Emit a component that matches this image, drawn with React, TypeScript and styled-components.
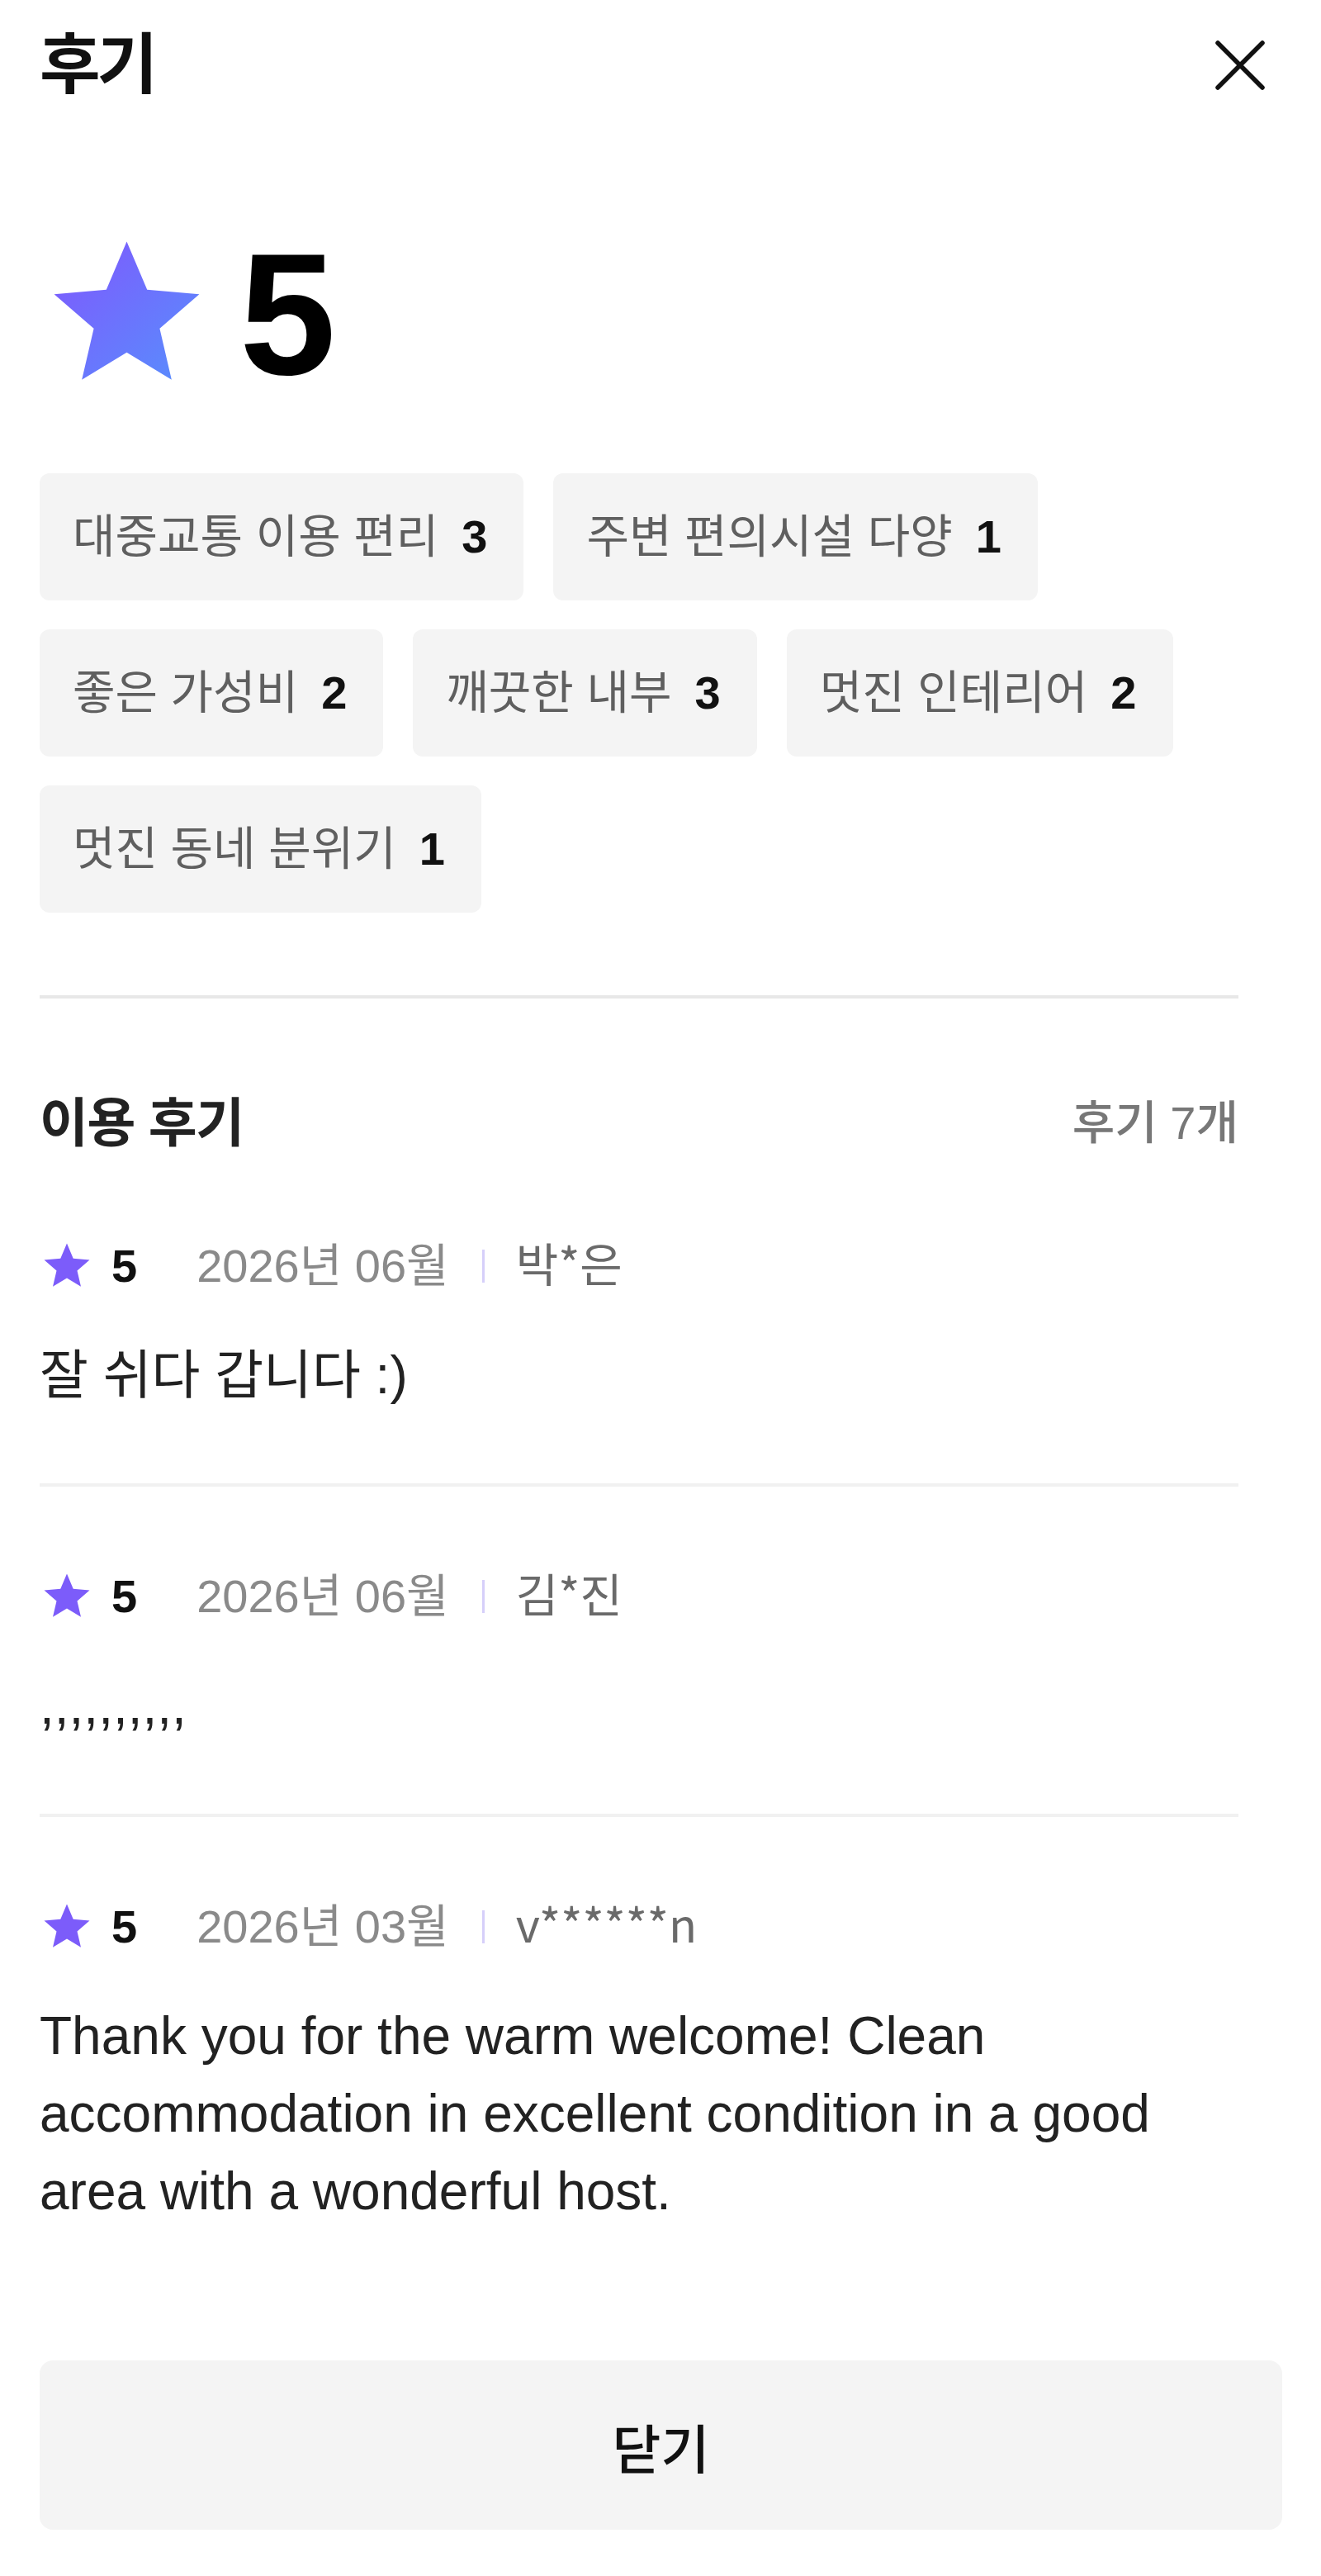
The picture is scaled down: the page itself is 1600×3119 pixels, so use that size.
import { createGlobalStyle } from 'styled-components';
import styled from 'styled-components';

interface Keyword {
    label: string;
    count: number;
}

interface Review {
    id: number;
    rating: number;
    date: string;
    author: string;
    text: string;
}

const keywords: Keyword[] = [
    { label: '대중교통 이용 편리', count: 3 },
    { label: '주변 편의시설 다양', count: 1 },
    { label: '좋은 가성비', count: 2 },
    { label: '깨끗한 내부', count: 3 },
    { label: '멋진 인테리어', count: 2 },
    { label: '멋진 동네 분위기', count: 1 },
];

const reviews: Review[] = [
    { id: 1, rating: 5, date: '2026년 06월', author: '박*은', text: '잘 쉬다 갑니다 :)' },
    { id: 2, rating: 5, date: '2026년 06월', author: '김*진', text: ',,,,,,,,,,' },
    {
        id: 3,
        rating: 5,
        date: '2026년 03월',
        author: 'v******n',
        text: 'Thank you for the warm welcome! Clean accommodation in excellent condition in a good area with a wonderful host.',
    },
];

const STAR_PATH = 'M12 17.27L18.18 21l-1.64-7.03L22 9.24l-7.19-.61L12 2 9.19 8.63 2 9.24l5.46 4.73L5.82 21z';

function Star({ size, fill }: { size: number; fill: string }) {
    return (
        <svg width={size} height={size} viewBox="0 0 24 24" aria-hidden="true">
            <defs>
                <linearGradient id="starGradient" x1="0" y1="0" x2="1" y2="1">
                    <stop offset="0" stopColor="#8156fd" />
                    <stop offset="1" stopColor="#578ffd" />
                </linearGradient>
            </defs>
            <path d={STAR_PATH} fill={fill} />
        </svg>
    );
}

function App() {
    return (
        <>
            <GlobalStyle />
            <Page>
                <Header>
                    <Title>후기</Title>
                    <CloseButton aria-label="닫기">
                        <svg width="60" height="60" viewBox="0 0 60 60">
                            <path d="M3 3L57 57M57 3L3 57" stroke="#111" strokeWidth="5.5" strokeLinecap="round" />
                        </svg>
                    </CloseButton>
                </Header>

                <Content>
                    <Rating>
                        <Star size={211} fill="url(#starGradient)" />
                        <RatingValue>5</RatingValue>
                    </Rating>

                    <KeywordList>
                        {keywords.map((keyword) => (
                            <KeywordChip key={keyword.label}>
                                <KeywordLabel>{keyword.label}</KeywordLabel>
                                <KeywordCount>{keyword.count}</KeywordCount>
                            </KeywordChip>
                        ))}
                    </KeywordList>

                    <Divider />

                    <SectionHead>
                        <SectionTitle>이용 후기</SectionTitle>
                        <ReviewCount>후기 7개</ReviewCount>
                    </SectionHead>

                    {reviews.map((review) => (
                        <ReviewItem key={review.id}>
                            <Meta>
                                <Star size={66} fill="#7c5cfa" />
                                <Score>{review.rating}</Score>
                                <MetaDate>{review.date}</MetaDate>
                                <MetaDivider />
                                <Author>{review.author}</Author>
                            </Meta>
                            <ReviewText>{review.text}</ReviewText>
                        </ReviewItem>
                    ))}
                </Content>

                <Footer>
                    <CloseAction>닫기</CloseAction>
                </Footer>
            </Page>
        </>
    );
}

export default App;

const GlobalStyle = createGlobalStyle`
    * {
        box-sizing: border-box;
    }

    body {
        margin: 0;
        background: #fff;
        color: #111;
        font-family: "Liberation Sans", "Noto Sans CJK KR", sans-serif;
    }
`;

const Page = styled.div`
    min-height: 100vh;

    display: flex;
    flex-direction: column;
`;

const Header = styled.header`
    height: 158px;
    padding: 0 68px 0 48px;

    display: flex;
    align-items: center;
    justify-content: space-between;
`;

const Title = styled.h1`
    margin: 0;

    font-size: 80px;
    line-height: 1;
    font-weight: 700;
    letter-spacing: -0.05em;
    color: #111;
`;

const CloseButton = styled.button`
    width: 60px;
    height: 60px;
    padding: 0;

    display: flex;

    border: none;
    background: none;
    cursor: pointer;
`;

const Content = styled.main`
    padding: 0 100px 0 48px;
`;

const Rating = styled.div`
    margin-top: 117px;

    display: flex;
    align-items: center;
`;

const RatingValue = styled.span`
    margin-left: 31px;

    font-size: 210px;
    line-height: 1;
    font-weight: 700;
    color: #000;
`;

const KeywordList = styled.ul`
    list-style: none;
    margin: 87px 0 0;
    padding: 0;

    display: flex;
    flex-wrap: wrap;
    gap: 35px 36px;
`;

const KeywordChip = styled.li`
    height: 154px;
    padding: 0 44px 0 40px;

    display: flex;
    align-items: center;
    gap: 28px;

    background-color: #f4f4f4;
    border-radius: 12px;

    font-size: 56px;
    line-height: 1;
    white-space: nowrap;
`;

const KeywordLabel = styled.span`
    color: #5f5f5f;
`;

const KeywordCount = styled.span`
    color: #111;
    font-weight: 700;
`;

const Divider = styled.hr`
    margin: 100px 0 0;

    height: 4px;

    border: none;
    background-color: #e8e8e8;
`;

const SectionHead = styled.div`
    margin-top: 111px;
    height: 80px;

    display: flex;
    align-items: center;
    justify-content: space-between;
`;

const SectionTitle = styled.h2`
    margin: 0;

    font-size: 64px;
    line-height: 1;
    font-weight: 700;
    letter-spacing: -0.02em;
    color: #222;
`;

const ReviewCount = styled.span`
    font-size: 56px;
    line-height: 1;
    font-weight: 500;
    color: #777;
`;

const ReviewItem = styled.article`
    padding: 98px 0 84px;

    border-bottom: 4px solid #f1f1f1;

    &:last-child {
        border-bottom: none;
    }
`;

const Meta = styled.div`
    height: 70px;

    display: flex;
    align-items: center;

    font-size: 56px;
    line-height: 1;
`;

const Score = styled.span`
    margin-left: 21px;

    font-weight: 700;
    color: #111;
`;

const MetaDate = styled.span`
    margin-left: 72px;

    color: #8a8a8a;
`;

const MetaDivider = styled.span`
    width: 3px;
    height: 40px;
    margin: 0 38px 0 40px;

    background-color: #d6cffa;
`;

const Author = styled.span`
    margin-bottom: 10px;

    font-family: "Noto Sans CJK KR", sans-serif;
    font-weight: 400;
    color: #6a6a6a;
`;

const ReviewText = styled.p`
    margin: 50px 0 0;

    font-size: 64px;
    line-height: 94px;
    color: #222;
`;

const Footer = styled.footer`
    margin-top: auto;
    padding: 0 47px 56px 48px;
`;

const CloseAction = styled.button`
    width: 100%;
    height: 205px;

    border: none;
    border-radius: 16px;
    background-color: #f4f4f4;

    font-family: inherit;
    font-size: 64px;
    font-weight: 500;
    color: #111;
    cursor: pointer;
`;
